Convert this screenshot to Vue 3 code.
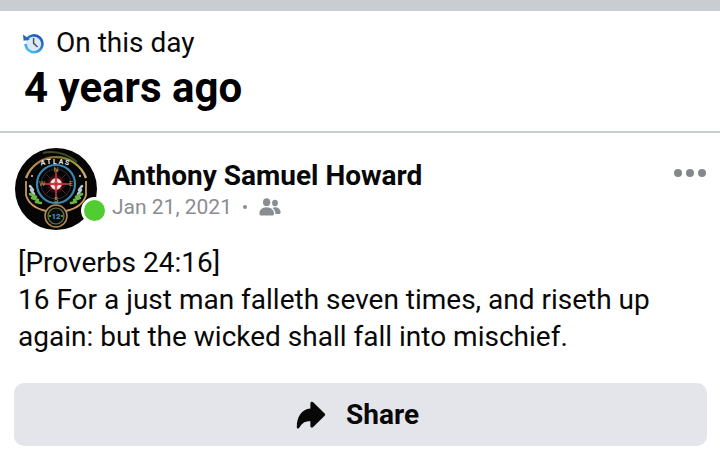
<template>
  <main class="memory">
    <div class="memory__strip" />

    <header class="memory__header">
      <div class="memory__label">
        <svg class="memory__clock" viewBox="0 0 22 22" aria-hidden="true">
          <defs>
            <linearGradient id="clockRing" x1="0.8" y1="0.1" x2="0.2" y2="1">
              <stop offset="0" stop-color="#1f5fb5" />
              <stop offset="0.5" stop-color="#2c86d8" />
              <stop offset="1" stop-color="#4cc3f5" />
            </linearGradient>
          </defs>
          <circle cx="12" cy="11" r="8" fill="#dfe9f5" />
          <path d="M4.4 8.2A8.4 8.4 0 1 1 3.6 12" fill="none" stroke="url(#clockRing)" stroke-width="2.6" />
          <path d="M1 2.4 L1.6 8.8 L7.8 7.6 Z" fill="#2065bd" />
          <path d="M11.6 6v5.4l4 3.6" fill="none" stroke="#4b5360" stroke-width="1.5" />
        </svg>
        <span>On this day</span>
      </div>
      <h1 class="memory__title">4 years ago</h1>
    </header>

    <article class="post">
      <div class="post__head">
        <div class="avatar">
          <svg class="avatar__img" viewBox="0 0 82 82" role="img" aria-label="Atlas">
            <defs>
              <radialGradient id="coreGlow">
                <stop offset="0" stop-color="#d8323c" />
                <stop offset="0.5" stop-color="#7c1a22" />
                <stop offset="1" stop-color="#120809" stop-opacity="0" />
              </radialGradient>
              <linearGradient id="topArc" x1="0" y1="0" x2="1" y2="0">
                <stop offset="0" stop-color="#c99a55" />
                <stop offset="0.45" stop-color="#8a6a2e" />
                <stop offset="0.75" stop-color="#7f9440" />
                <stop offset="1" stop-color="#dcae6a" />
              </linearGradient>
            </defs>
            <circle cx="41" cy="41" r="41" fill="#050505" />
            <g fill="none">
              <path d="M11 30A32 32 0 0 1 71 30" stroke="url(#topArc)" stroke-width="2.4" />
              <path d="M28 5Q46 1 62 14" stroke="#3f4a24" stroke-width="2" />
              <path d="M11 33V47Q14 59 31 63M71 33V47Q68 59 51 63" stroke="#c89a58" stroke-width="1.8" />
              <circle cx="41" cy="36" r="19" stroke="#3d86ad" stroke-width="2.2" />
              <circle cx="41" cy="36" r="15" stroke="#25343f" stroke-width="1" />
              <path d="M30 25L52 47M52 25L30 47" stroke="#5a2025" stroke-width="1" />
            </g>
            <circle cx="41" cy="36" r="11" fill="url(#coreGlow)" />
            <path d="M41 22V52M27 36H55" stroke="#c9444a" stroke-width="1.4" />
            <circle cx="41" cy="36" r="4" fill="none" stroke="#f3dedc" stroke-width="3.4" />
            <path d="M41 30V42M35 36H47" stroke="#d0343b" stroke-width="1.8" />
            <g stroke-width="2.6" stroke-linecap="round">
              <path d="M15 38l3 4M16 42l3 4M67 38l-3 4M66 42l-3 4" stroke="#b9c8d2" />
              <path d="M15 46l6 3M17 50l6 2M21 54l5 1M67 46l-6 3M65 50l-6 2M61 54l-5 1" stroke="#68b944" />
            </g>
            <circle cx="17" cy="28" r="1" fill="#dcdcdc" />
            <circle cx="65" cy="28" r="1" fill="#dcdcdc" />
            <circle cx="41" cy="68" r="11" fill="#0c0c0a" stroke="#b38c4c" stroke-width="1.5" />
            <circle cx="41" cy="68" r="8" fill="none" stroke="#6d7a4c" stroke-width="1.2" />
            <g class="avatar__marks" text-anchor="middle">
              <text x="28" y="17" transform="rotate(-12 28 15)">A</text>
              <text x="34" y="16" transform="rotate(-6 34 14)">T</text>
              <text x="40" y="16">L</text>
              <text x="46" y="16" transform="rotate(6 46 14)">A</text>
              <text x="52" y="17" transform="rotate(12 52 15)">S</text>
            </g>
            <g class="avatar__points" text-anchor="middle">
              <text x="41" y="24">N</text>
              <text x="41" y="54">S</text>
              <text x="27" y="38">W</text>
              <text x="56" y="38">E</text>
            </g>
            <text class="avatar__number" x="41" y="71" text-anchor="middle">12</text>
            <circle cx="35" cy="68" r="1" fill="#68b944" />
            <circle cx="47" cy="68" r="1" fill="#68b944" />
          </svg>
          <span class="avatar__status" />
        </div>

        <div class="post__who">
          <h2 class="post__name">Anthony Samuel Howard</h2>
          <div class="post__meta">
            <time datetime="2021-01-21">Jan 21, 2021</time>
            <span class="post__dot" />
            <svg class="post__friends" viewBox="0 0 22 18" aria-label="Friends">
              <ellipse cx="7.6" cy="4.2" rx="3.6" ry="3.9" />
              <path d="M7.5 9.2C3.2 9.2 0.4 12 0.4 15.4C0.4 17 1.2 17.6 2.6 17.6H12.8C14.2 17.6 15 17 15 15.4C15 12 12 9.2 7.5 9.2Z" />
              <ellipse cx="16" cy="5" rx="2.9" ry="3.2" />
              <path d="M13.6 9.9C14.4 9.4 15.3 9.2 16.2 9.2C19.3 9.2 21.6 11.5 21.6 14.2C21.6 15.5 21 16 19.9 16H16.4C16.5 13.6 15.5 11.4 13.6 9.9Z" />
            </svg>
          </div>
        </div>

        <button class="post__more" type="button" aria-label="More options">
          <span v-for="n in 3" :key="n" class="post__more-dot" />
        </button>
      </div>

      <p class="post__text">
        <template v-for="(line, i) in lines" :key="i"><br v-if="i">{{ line }}</template>
      </p>

      <button class="share" type="button">
        <svg class="share__icon" viewBox="0 0 30 28" aria-hidden="true">
          <path d="M14.4 2.2C14.4 0.6 16 0.2 17.2 1.2L28.6 12.4C29.4 13.2 29.4 14 28.6 14.8L17.2 26C16 27 14.4 26.6 14.4 25V20.2C9 20 6 22 3.4 26.6C2.4 28.2 0.8 27.8 0.8 26C0.8 15.6 5.6 8.2 14.4 7.4Z" />
        </svg>
        <span>Share</span>
      </button>
    </article>
  </main>
</template>

<script setup>
const lines = [
  '[Proverbs 24:16]',
  '16 For a just man falleth seven times, and riseth up again: but the wicked shall fall into mischief.',
]
</script>

<style>
body { background: #fff; }
</style>

<style scoped>
.memory {
  font-family: Roboto, 'Liberation Sans', sans-serif;
  font-size: 28px;
  color: #080809;
}

.memory__strip { height: 11px; background: #c9ccd1; }

.memory__header {
  padding: 14px 24px 18px;
  border-bottom: 2px solid #c9cccd;
}
.memory__label {
  display: flex;
  align-items: center;
  gap: 12px;
  line-height: 36px;
}
.memory__clock { width: 22px; height: 22px; margin-left: -2px; }
.memory__title {
  margin: 2px 0 0;
  font-size: 42px;
  line-height: 50px;
  font-weight: 700;
  color: #000;
}

.post { padding: 15px 13px 10px 14px; }
.post__head { display: flex; align-items: flex-start; gap: 15px; }

.avatar { position: relative; width: 82px; height: 82px; margin-left: 1px; flex: none; }
.avatar__img { display: block; width: 82px; height: 82px; }
.avatar__marks { font-size: 7px; font-weight: 700; fill: #f0f0f0; }
.avatar__points { font-size: 7px; fill: #c89a58; }
.avatar__number { font-size: 8px; font-weight: 700; fill: #3c9be0; }
.avatar__status {
  position: absolute;
  right: -11px;
  bottom: 6px;
  width: 21px;
  height: 21px;
  border: 3px solid #fff;
  border-radius: 50%;
  background: #51cc31;
}

.post__who { flex: 1; min-width: 0; padding-top: 11px; }
.post__name { margin: 0; font-size: 28px; line-height: 34px; font-weight: 700; }
.post__meta {
  display: flex;
  align-items: center;
  font-size: 21px;
  line-height: 28px;
  color: #8a8d91;
}
.post__dot { width: 4px; height: 4px; margin: 0 12px 0 11px; border-radius: 50%; background: #8a8d91; }
.post__friends { width: 22px; height: 18px; fill: #8a8d91; }

.post__more {
  display: flex;
  gap: 4px;
  padding: 21px 1px;
  border: 0;
  background: none;
  cursor: pointer;
}
.post__more-dot { width: 8px; height: 8px; border-radius: 50%; background: #84878b; }

.post__text { margin: 14px 4px 28px; line-height: 37px; }

.share {
  display: flex;
  align-items: center;
  justify-content: center;
  gap: 20px;
  width: 100%;
  height: 63px;
  padding: 0 6px 0 0;
  border: 0;
  border-radius: 10px;
  background: #e4e5ea;
  color: #080809;
  font: inherit;
  font-weight: 700;
  cursor: pointer;
}
.share__icon { width: 30px; height: 28px; fill: currentColor; }
</style>
